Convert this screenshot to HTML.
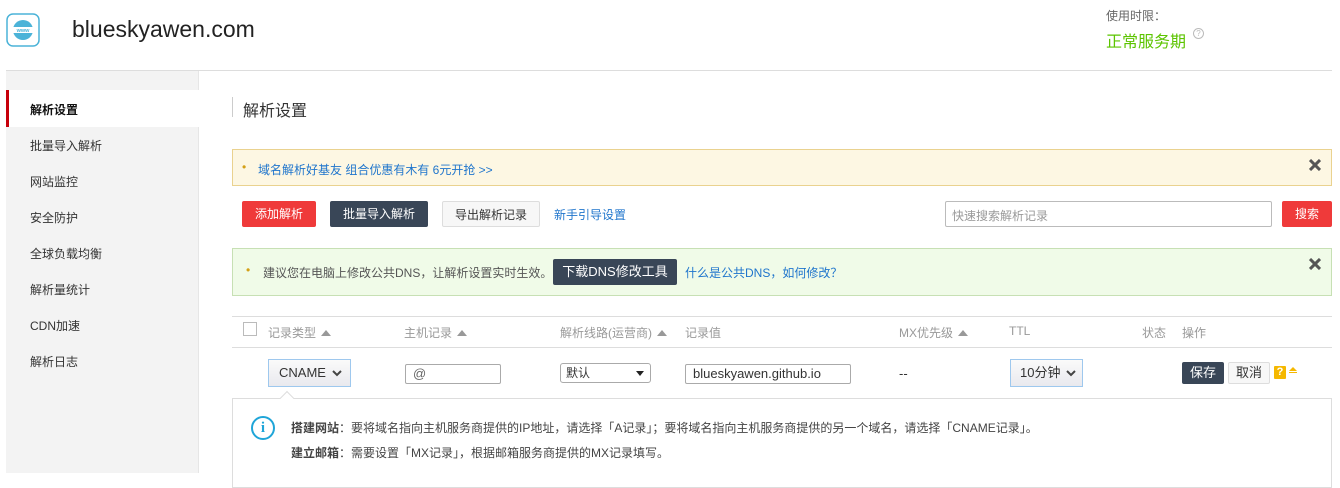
<!DOCTYPE html>
<html><head><meta charset="utf-8"><style>
*{margin:0;padding:0;box-sizing:border-box}
body{width:1340px;height:473px;overflow:hidden;background:#fff;font-family:"Liberation Sans","Noto Sans CJK SC",sans-serif;font-size:12px;color:#333;position:relative}
.a{position:absolute;white-space:nowrap}
.btn{position:absolute;height:26px;line-height:26px;text-align:center;font-size:12px;border-radius:2px}
.close{position:absolute}
.th{position:absolute;top:324px;color:#999;font-size:12px}
.tri{display:inline-block;width:0;height:0;border-left:5px solid transparent;border-right:5px solid transparent;border-bottom:6px solid #999;margin-left:5px;vertical-align:1px}
.sb{position:absolute;left:30px;font-size:12px;color:#333}
</style></head><body>
<svg class="a" style="left:6px;top:13px" width="34" height="34" viewBox="0 0 34 34">
<rect x="1" y="1" width="32" height="32" rx="6" fill="#fff" stroke="#4bb3d8" stroke-width="1.5"/>
<circle cx="17" cy="17" r="10" fill="#4bb3d8"/>
<rect x="7" y="14" width="20" height="6" fill="#fff"/>
<text x="17" y="19" font-size="5.5" text-anchor="middle" fill="#4bb3d8" font-family="Liberation Sans" font-weight="bold">www</text>
</svg>
<div class="a" style="left:72px;top:16px;font-size:23px;color:#222">blueskyawen.com</div>
<div class="a" style="left:1106px;top:7px;font-size:12px;color:#666">使用时限：</div>
<div class="a" style="left:1106px;top:28px;font-size:16px;color:#5cc400">正常服务期</div>
<div class="a" style="left:1193px;top:28px;width:11px;height:11px;border:1px solid #bbb;border-radius:50%;font-size:8px;line-height:9px;text-align:center;color:#bbb">?</div>
<div class="a" style="left:6px;top:70px;width:1326px;height:1px;background:#ddd"></div>
<div class="a" style="left:6px;top:71px;width:193px;height:402px;background:#f3f3f3;border-right:1px solid #e6e6e6"></div>
<div class="a" style="left:6px;top:90px;width:193px;height:37px;background:#fff;border-left:3px solid #c7000b"></div>
<div class="sb" style="top:101px;font-weight:bold;color:#111">解析设置</div>
<div class="sb" style="top:137px">批量导入解析</div>
<div class="sb" style="top:173px">网站监控</div>
<div class="sb" style="top:209px">安全防护</div>
<div class="sb" style="top:245px">全球负载均衡</div>
<div class="sb" style="top:281px">解析量统计</div>
<div class="sb" style="top:317px">CDN加速</div>
<div class="sb" style="top:353px">解析日志</div>
<div class="a" style="left:232px;top:97px;width:1px;height:20px;background:#ccc"></div>
<div class="a" style="left:243px;top:97px;font-size:16px;color:#333">解析设置</div>
<div class="a" style="left:232px;top:149px;width:1100px;height:37px;background:#fdf7e3;border:1px solid #ead28f"></div>
<div class="a" style="left:242px;top:160px;color:#d4a017">•</div>
<div class="a" style="left:258px;top:161px;color:#1f75cc">域名解析好基友 组合优惠有木有 6元开抢 &gt;&gt;</div>
<svg class="close" style="left:1309px;top:159px" width="12" height="12"><path d="M1 1L11 11M11 1L1 11" stroke="#555" stroke-width="3"/></svg>
<div class="btn" style="left:242px;top:201px;width:74px;background:#ef3a3a;color:#fff">添加解析</div>
<div class="btn" style="left:330px;top:201px;width:98px;background:#394657;color:#fff">批量导入解析</div>
<div class="btn" style="left:442px;top:201px;width:98px;background:#f7f7f7;border:1px solid #ddd;color:#333">导出解析记录</div>
<div class="a" style="left:554px;top:206px;color:#1f75cc">新手引导设置</div>
<div class="a" style="left:945px;top:201px;width:327px;height:26px;border:1px solid #bbb;border-radius:2px"></div>
<div class="a" style="left:952px;top:207px;color:#999">快速搜索解析记录</div>
<div class="btn" style="left:1282px;top:201px;width:50px;background:#ef3a3a;color:#fff">搜索</div>
<div class="a" style="left:232px;top:248px;width:1100px;height:48px;background:#f0fbe8;border:1px solid #c7e0b4"></div>
<div class="a" style="left:246px;top:263px;color:#d4a017">•</div>
<div class="a" style="left:263px;top:264px;color:#555">建议您在电脑上修改公共DNS，让解析设置实时生效。</div>
<div class="btn" style="left:553px;top:259px;width:124px;background:#394657;color:#fff;font-size:13px">下载DNS修改工具</div>
<div class="a" style="left:685px;top:264px;color:#1f75cc">什么是公共DNS，如何修改？</div>
<svg class="close" style="left:1309px;top:258px" width="12" height="12"><path d="M1 1L11 11M11 1L1 11" stroke="#555" stroke-width="3"/></svg>
<div class="a" style="left:232px;top:316px;width:1100px;height:1px;background:#ddd"></div>
<div class="a" style="left:232px;top:347px;width:1100px;height:1px;background:#ddd"></div>
<div class="a" style="left:243px;top:322px;width:14px;height:14px;border:1px solid #bbb;background:#fff"></div>
<div class="th" style="left:268px">记录类型<span class="tri"></span></div>
<div class="th" style="left:404px">主机记录<span class="tri"></span></div>
<div class="th" style="left:560px">解析线路(运营商)<span class="tri"></span></div>
<div class="th" style="left:685px">记录值</div>
<div class="th" style="left:899px">MX优先级<span class="tri"></span></div>
<div class="th" style="left:1009px">TTL</div>
<div class="th" style="left:1142px">状态</div>
<div class="th" style="left:1182px">操作</div>
<div class="a" style="left:268px;top:359px;width:83px;height:28px;border:1px solid #9ec8ee;background:linear-gradient(#fafafa,#e9e9ee);font-size:13px;line-height:26px;padding-left:10px">CNAME<svg style="position:absolute;left:63px;top:10px" width="10" height="7"><path d="M1 1L5 5L9 1" stroke="#444" stroke-width="2" fill="none"/></svg></div>
<div class="a" style="left:405px;top:364px;width:96px;height:20px;border:1px solid #aaa;border-radius:2px;padding-left:7px;line-height:18px;color:#666;font-size:13px">@</div>
<div class="a" style="left:560px;top:363px;width:91px;height:20px;border:1px solid #aaa;border-radius:3px;padding-left:5px;line-height:18px;font-size:12px">默认<span style="position:absolute;right:6px;top:7px;border-left:4px solid transparent;border-right:4px solid transparent;border-top:5px solid #222"></span></div>
<div class="a" style="left:685px;top:364px;width:166px;height:20px;border:1px solid #aaa;border-radius:2px;padding-left:7px;line-height:18px;font-size:13px">blueskyawen.github.io</div>
<div class="a" style="left:899px;top:366px;font-size:13px">--</div>
<div class="a" style="left:1010px;top:359px;width:73px;height:28px;border:1px solid #9ec8ee;background:linear-gradient(#fafafa,#e9e9ee);font-size:13px;line-height:26px;padding-left:9px">10分钟<svg style="position:absolute;left:55px;top:10px" width="10" height="7"><path d="M1 1L5 5L9 1" stroke="#444" stroke-width="2" fill="none"/></svg></div>
<div class="btn" style="left:1182px;top:362px;width:42px;height:22px;line-height:22px;background:#394657;color:#fff;font-size:13px">保存</div>
<div class="btn" style="left:1228px;top:362px;width:42px;height:22px;line-height:20px;background:#f7f7f7;border:1px solid #ddd;font-size:13px">取消</div>
<div class="a" style="left:1274px;top:366px;width:12px;height:13px;background:#f5b800;color:#fff;font-size:11px;font-weight:bold;text-align:center;line-height:13px;border-radius:1px">?</div>
<div class="a" style="left:1289px;top:367px;width:8px;height:8px"><div style="border-left:4px solid transparent;border-right:4px solid transparent;border-bottom:4px solid #f5b800"></div><div style="height:1px;background:#f5b800;margin-top:1px"></div></div>
<div class="a" style="left:232px;top:398px;width:1100px;height:90px;border:1px solid #ddd"></div>
<div class="a" style="left:282px;top:393px;width:10px;height:10px;background:#fff;border-left:1px solid #ddd;border-top:1px solid #ddd;transform:rotate(45deg)"></div>
<div class="a" style="left:251px;top:416px;width:24px;height:24px;border:2px solid #1fa5d8;border-radius:50%;color:#1fa5d8;font-weight:bold;font-size:15px;text-align:center;line-height:20px;font-family:'Liberation Serif',serif">i</div>
<div class="a" style="left:291px;top:419px;color:#444"><b>搭建网站</b>：要将域名指向主机服务商提供的IP地址，请选择「A记录」；要将域名指向主机服务商提供的另一个域名，请选择「CNAME记录」。</div>
<div class="a" style="left:291px;top:444px;color:#444"><b>建立邮箱</b>：需要设置「MX记录」，根据邮箱服务商提供的MX记录填写。</div>
</body></html>
